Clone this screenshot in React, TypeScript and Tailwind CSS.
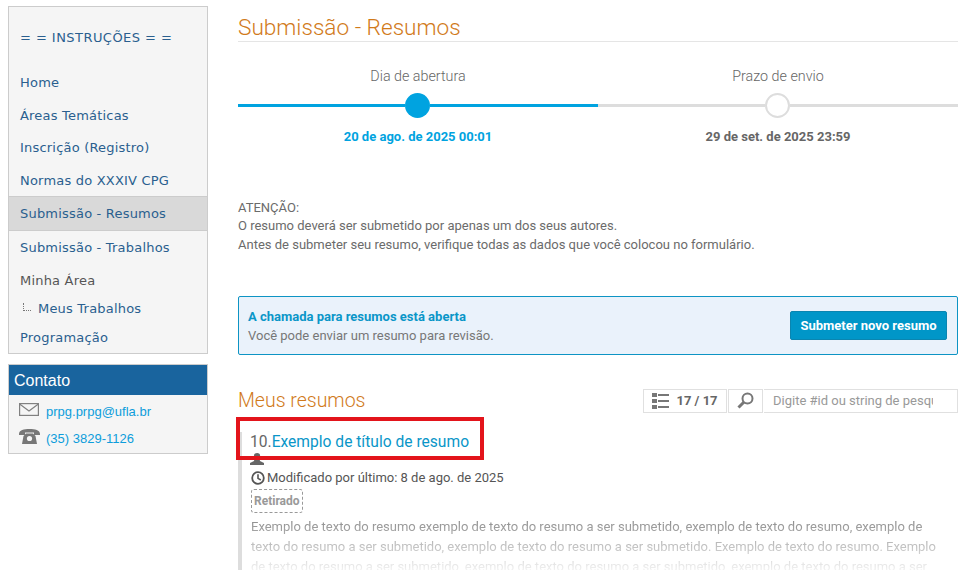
const menu = [
  { label: "Home", cls: "h-[33px]" },
  { label: "Áreas Temáticas", cls: "h-[33px]" },
  { label: "Inscrição (Registro)", cls: "h-[32px]" },
  { label: "Normas do XXXIV CPG", cls: "h-[32px] pt-px" },
]

function MailIcon() {
  return (
    <svg width="20" height="13" viewBox="0 0 20 13" fill="none" stroke="#808080" strokeWidth="1.2">
      <rect x="0.6" y="0.6" width="18.8" height="11.8" />
      <path d="M0.6 1 L10 8 L19.4 1" />
    </svg>
  )
}

function PhoneIcon() {
  return (
    <svg width="21" height="15" viewBox="0 0 21 15" fill="#777">
      <path d="M0 5 C0 1 5 0 10.5 0 C16 0 21 1 21 5 L21 6 L15 6 L15 3.5 L6 3.5 L6 6 L0 6 Z" />
      <path d="M4.5 7 L7 4.5 L14 4.5 L16.5 7 L18 15 L3 15 Z" />
      <circle cx="10.5" cy="9.5" r="2.6" fill="#f5f5f5" />
    </svg>
  )
}

function ListIcon() {
  return (
    <svg width="17" height="16" viewBox="0 0 17 16" fill="#777">
      <rect x="0" y="0" width="5" height="4" />
      <rect x="0" y="6" width="5" height="4" />
      <rect x="0" y="12" width="5" height="4" />
      <rect x="6" y="1" width="11" height="2" />
      <rect x="6" y="7" width="11" height="2" />
      <rect x="6" y="13" width="11" height="2" />
    </svg>
  )
}

function SearchIcon() {
  return (
    <svg width="17" height="17" viewBox="0 0 17 17" fill="none" stroke="#777">
      <circle cx="10.5" cy="6.5" r="5" strokeWidth="2" />
      <path d="M7 10 L1.5 15.5" strokeWidth="3" />
    </svg>
  )
}

function UserIcon() {
  return (
    <svg width="14" height="12" viewBox="0 0 14 12" fill="#666">
      <circle cx="7" cy="3.2" r="3.2" />
      <path d="M4.5 5.5 L9.5 5.5 L10 8 L14 10 L14 12 L0 12 L0 10 L4 8 Z" />
    </svg>
  )
}

function ClockIcon() {
  return (
    <svg width="14" height="14" viewBox="0 0 14 14" fill="none" stroke="#555">
      <circle cx="7" cy="7" r="5.8" strokeWidth="1.8" />
      <path d="M7 3.2 L7 7.4 L9.8 9" strokeWidth="1.6" />
    </svg>
  )
}

export default function App() {
  return (
    <div className="h-[570px] overflow-hidden bg-white flex font-['Roboto',sans-serif]">
      {/* Sidebar */}
      <aside className="w-[200px] ml-2 mt-[6px] shrink-0 font-['DejaVu_Sans',sans-serif] text-[13px] text-[#2a5f8f] tracking-[0.2px]">
        <nav className="border border-[#ccc] bg-[#f5f5f5] h-[348px]">
          <div className="pl-[11px] pt-[21px] h-[59px] tracking-[0.45px]">= = INSTRUÇÕES = =</div>
          {menu.map((m) => (
            <div key={m.label} className={`${m.cls} pl-[11px] flex items-center`}>
              {m.label}
            </div>
          ))}
          <div className="h-[35px] pl-[11px] flex items-center bg-[#d9d9d9] border-y border-[#ccc]">Submissão - Resumos</div>
          <div className="h-[33px] pl-[11px] flex items-center">Submissão - Trabalhos</div>
          <div className="h-[33px] pl-[11px] flex items-center text-[#555]">Minha Área</div>
          <div className="h-[24px] pl-[11px] flex items-center gap-[7px]">
            <span className="w-2 h-2 mb-1 ml-[3px] border-l border-b border-dotted border-[#777]" />
            <span>Meus Trabalhos</span>
          </div>
          <div className="h-[33px] pl-[11px] flex items-center">Programação</div>
        </nav>

        <div className="mt-[10px] border border-[#ccc] bg-[#f5f5f5] h-[90px] font-['Liberation_Sans',sans-serif] tracking-normal">
          <div className="h-[30px] bg-[#19649e] text-white text-base pl-[5px] pt-[2px] flex items-center">
            Contato
          </div>
          <div className="h-[28px] pl-[10px] flex items-center gap-[7px] text-[#0d9ddb]">
            <MailIcon />
            <span className="mt-[6px]">prpg.prpg@ufla.br</span>
          </div>
          <div className="h-[26px] pl-[10px] flex items-center gap-[6px] text-[#0d9ddb]">
            <PhoneIcon />
            <span className="mt-[6px]">(35) 3829-1126</span>
          </div>
        </div>
      </aside>

      {/* Main */}
      <main className="w-[720px] ml-[30px] shrink-0">
        <h1 className="mt-[14px] h-[27px] text-[22.6px] leading-[28px] font-light text-[#d17a1a] border-b border-[#e5e5e5] box-content">
          Submissão - Resumos
        </h1>

        <div className="grid grid-cols-2 mt-[24px]">
          <div className="flex flex-col items-center">
            <div className="text-[14.3px] font-light text-[#666] leading-5">Dia de abertura</div>
            <div className="w-full flex items-center mt-[7px]">
              <div className="w-[167px] h-[3px] bg-[#00a3e0]" />
              <div className="w-[25px] h-[25px] rounded-full bg-[#00a3e0]" />
              <div className="flex-1 h-[3px] bg-[#00a3e0]" />
            </div>
            <div className="mt-[9px] text-[13px] leading-5 font-bold text-[#00a3e0]">20 de ago. de 2025 00:01</div>
          </div>
          <div className="flex flex-col items-center">
            <div className="text-[14.3px] font-light text-[#666] leading-5">Prazo de envio</div>
            <div className="w-full flex items-center mt-[7px]">
              <div className="w-[167px] h-[3px] bg-[#ddd]" />
              <div className="w-[25px] h-[25px] rounded-full bg-white border-2 border-[#ddd]" />
              <div className="flex-1 h-[3px] bg-[#ddd]" />
            </div>
            <div className="mt-[9px] text-[13px] leading-5 font-bold text-[#666]">29 de set. de 2025 23:59</div>
          </div>
        </div>

        <div className="mt-[51px] text-[13px] leading-[19px] text-[#6b6b6b]">
          <div className="h-[18px]">ATENÇÃO:</div>
          <div>O resumo deverá ser submetido por apenas um dos seus autores.</div>
          <div>Antes de submeter seu resumo, verifique todas as dados que você colocou no formulário.</div>
        </div>

        <div className="mt-[42px] h-[59px] border border-[#0d94c4] rounded-[2px] bg-[#eaf2fb] flex items-center justify-between pl-[9px] pr-[10px]">
          <div className="text-[13px] leading-[19px]">
            <div className="font-bold text-[#0a96c8]">A chamada para resumos está aberta</div>
            <div className="text-[#777]">Você pode enviar um resumo para revisão.</div>
          </div>
          <button className="h-[29px] w-[157px] bg-[#0096c8] border border-[#0a85b0] rounded-[2px] text-white text-[13px] font-bold">
            Submeter novo resumo
          </button>
        </div>

        <div className="mt-[30px] flex items-center justify-between h-[30px]">
          <h2 className="text-[19.5px] pt-px font-light text-[#d17a1a]">Meus resumos</h2>
          <div className="flex gap-px h-6 mt-px text-[13px]">
            <div className="w-[84px] border border-[#e0e0e0] flex items-center justify-center gap-[7px] font-bold text-[#666]">
              <ListIcon />
              <span>17 / 17</span>
            </div>
            <div className="w-[35px] border border-[#e0e0e0] flex items-center justify-center">
              <SearchIcon />
            </div>
            <input
              className="w-[194px] border border-[#e0e0e0] border-l-0 pl-[9px] pr-6 outline-none placeholder:text-[#999]"
              placeholder="Digite #id ou string de pesquisa"
            />
          </div>
        </div>

        <div className="relative mt-[17px] border-l-4 border-[#ddd] pl-[9px] h-[200px]">
          <div className="absolute -left-[6px] -top-[15px] w-[248px] h-[43px] border-4 border-[#e3141b]" />
          <div className="-ml-px text-[15.6px] leading-5 text-[#666]">
            10.<span className="text-[#0a96c8]">Exemplo de título de resumo</span>
          </div>
          <div className="mt-[1px] h-[15px] -ml-px">
            <UserIcon />
          </div>
          <div className="flex items-center gap-[2px] text-[13px] leading-[20px] text-[#555]">
            <ClockIcon />
            <span>Modificado por último: 8 de ago. de 2025</span>
          </div>
          <div className="inline-block border border-dashed border-[#999] rounded-[3px] px-[2px] text-xs leading-[22px] font-bold text-[#999]">
            Retirado
          </div>
          <div className="mt-[4px] text-[13px] leading-[20px] text-[#888] mask-b-from-0% mask-b-to-100% h-[60px] w-[690px]">
            Exemplo de texto do resumo exemplo de texto do resumo a ser submetido, exemplo de texto do resumo, exemplo de texto do resumo a ser submetido, exemplo de texto do resumo a ser submetido. Exemplo de texto do resumo. Exemplo de texto do resumo a ser submetido, exemplo de texto do resumo a ser submetido, exemplo de texto do resumo a ser
          </div>
        </div>
      </main>
    </div>
  )
}
